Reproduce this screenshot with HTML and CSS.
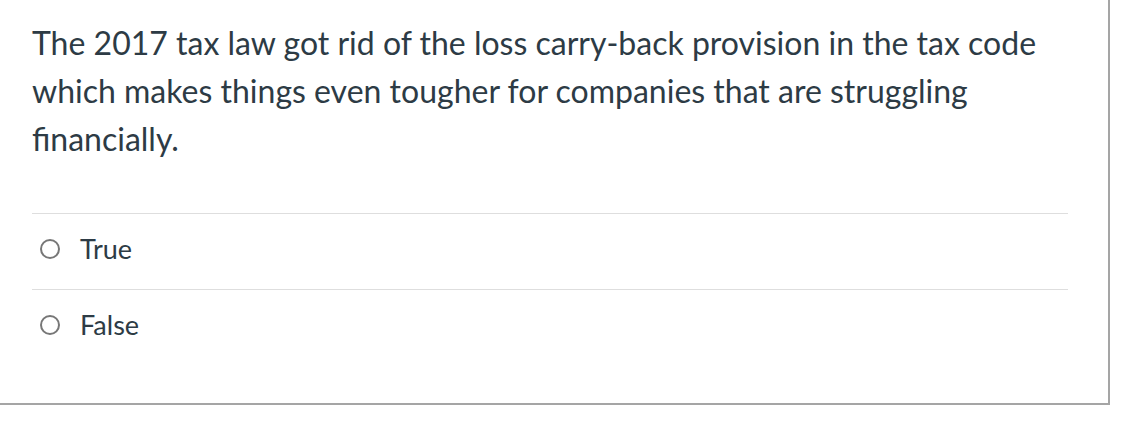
FILE: index.html
```html
<!DOCTYPE html>
<html>
<head>
<meta charset="utf-8">
<link rel="stylesheet" href="styles.css">
</head>
<body>
<div class="question">
  <div class="question-text">The 2017 tax law got rid of the loss carry-back provision in the tax code which makes things even tougher for companies that are struggling financially.</div>
  <div class="answers">
    <label class="answer"><span class="radio"></span><span class="answer-label">True</span></label>
    <label class="answer"><span class="radio"></span><span class="answer-label">False</span></label>
  </div>
</div>
</body>
</html>
```
FILE: styles.css
```css
html, body {
  margin: 0;
  padding: 0;
  background: #fff;
}
body {
  font-family: Lato, "Open Sans", sans-serif;
  color: #2d3b45;
}
.question {
  box-sizing: border-box;
  width: 1112px;
  height: 407px;
  margin: -2px 0 0 -2px;
  border: 2px solid #a5a5a5;
  background: #fff;
  padding: 19px 40px 0 32px;
}
.question-text {
  font-size: 32px;
  line-height: 48px;
}
.answers {
  margin-top: 50px;
}
.answer {
  display: flex;
  align-items: center;
  border-top: 1px solid #dedede;
  padding: 11px 0 16px 8px;
}
.radio {
  box-sizing: border-box;
  width: 20px;
  height: 20px;
  border: 2px solid #777;
  border-radius: 50%;
  flex: none;
}
.answer-label {
  margin-left: 20px;
  font-size: 27px;
  line-height: 48px;
}
```
